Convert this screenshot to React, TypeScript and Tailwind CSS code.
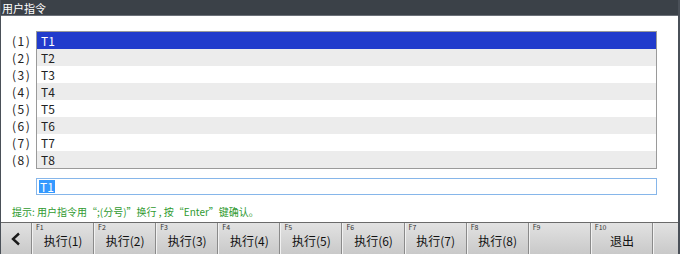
const rows = ['T1', 'T2', 'T3', 'T4', 'T5', 'T6', 'T7', 'T8'];

const keys = [
  { f: 'F1', label: '执行(1)' },
  { f: 'F2', label: '执行(2)' },
  { f: 'F3', label: '执行(3)' },
  { f: 'F4', label: '执行(4)' },
  { f: 'F5', label: '执行(5)' },
  { f: 'F6', label: '执行(6)' },
  { f: 'F7', label: '执行(7)' },
  { f: 'F8', label: '执行(8)' },
  { f: 'F9', label: '' },
  { f: 'F10', label: '退出' },
];

const font = { fontFamily: '"Noto Sans CJK SC", "DejaVu Sans", sans-serif' };

export default function App() {
  return (
    <div
      className="w-[680px] h-[254px] flex flex-col bg-white overflow-hidden border-l border-r-2 border-[#4a5058]"
      style={font}
    >
      {/* Title bar */}
      <div className="h-[16px] shrink-0 bg-[#3b4148] text-white text-[11px] leading-[16px] pl-[1px] border-b border-[#6b7078]">
        用户指令
      </div>

      {/* Body */}
      <div className="flex-1 flex flex-col pt-[15px]">
        <div className="flex">
          <div className="w-[35px] shrink-0 flex flex-col pt-[1px] text-[12px] text-[#222]">
            {rows.map((_, i) => (
              <div key={i} className="h-[17px] leading-[17px] pl-[11px] tracking-[1.5px]">
                ({i + 1})
              </div>
            ))}
          </div>
          <div className="w-[621px] border border-[#9a9a9a]">
            {rows.map((r, i) => (
              <div
                key={r}
                className={
                  'h-[17px] leading-[17px] pl-[4px] text-[12px] ' +
                  (i === 0
                    ? 'bg-[#213bcc] text-white'
                    : i % 2 === 1
                      ? 'bg-[#ececec] text-[#222]'
                      : 'bg-white text-[#222]')
                }
              >
                {r}
              </div>
            ))}
          </div>
        </div>

        <div className="pl-[35px] mt-[9px]">
          <div className="w-[621px] h-[17px] border border-[#86b6ea] flex items-center pl-[2px]">
            <span className="bg-[#3399ff] text-white text-[12px] leading-[13px] px-[1px]">T1</span>
          </div>
        </div>

        <div className="pl-[11px] mt-[10px] text-[10px] leading-[14px] text-[#2f9a2f]">
          提示: 用户指令用“;(分号)”换行 , 按“Enter”键确认。
        </div>
      </div>

      {/* Function key bar */}
      <div className="h-[32px] shrink-0 flex border-t border-[#6a6a6a] bg-gradient-to-b from-[#e2e2e2] to-[#c9c9c9]">
        <div className="w-[31px] shrink-0 flex items-center justify-center border-r border-[#8a8a8a]">
          <svg width="12" height="14" viewBox="0 0 12 14">
            <path d="M9 1.5 L3 7 L9 12.5" fill="none" stroke="#1a1a1a" strokeWidth="2.4" />
          </svg>
        </div>
        {keys.map((k) => (
          <div
            key={k.f}
            className="w-[62.1px] shrink-0 relative border-l border-[#f2f2f2] border-r border-r-[#8a8a8a] flex items-center justify-center pt-[4px]"
          >
            <span className="absolute left-[3px] top-[0px] text-[7px] leading-[9px] text-[#333]">{k.f}</span>
            <span className="text-[12px] text-[#111]">{k.label}</span>
          </div>
        ))}
        <div className="flex-1 border-l border-[#f2f2f2]" />
      </div>
    </div>
  );
}
